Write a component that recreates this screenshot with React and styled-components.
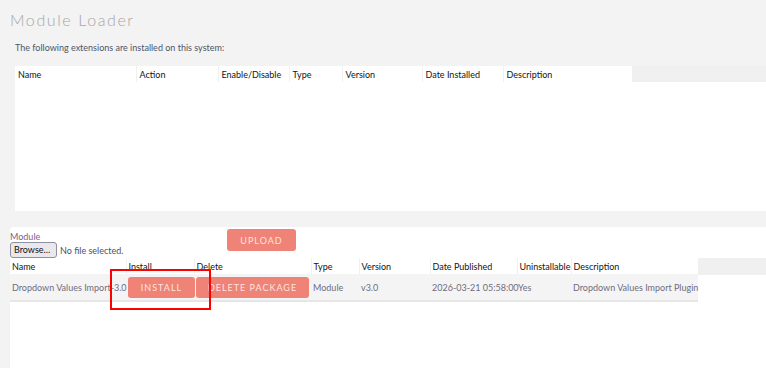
import React from "react";
import styled, { createGlobalStyle } from "styled-components";

const Global = createGlobalStyle`
  html, body {
    margin: 0;
    padding: 0;
    background: #f3f3f3;
    font-family: Lato, "Open Sans", sans-serif;
  }
`;

const installed = [
  { label: "Name", w: 121 },
  { label: "Action", w: 82 },
  { label: "Enable/Disable", w: 71 },
  { label: "Type", w: 53 },
  { label: "Version", w: 80 },
  { label: "Date Installed", w: 81 },
  { label: "Description", w: 129 }
];

const available = [
  { label: "Name", w: 116 },
  { label: "Install", w: 68 },
  { label: "Delete", w: 117 },
  { label: "Type", w: 48 },
  { label: "Version", w: 71 },
  { label: "Date Published", w: 87 },
  { label: "Uninstallable", w: 54 },
  { label: "Description", w: 127 }
];

const total = cols => cols.reduce((s, c) => s + c.w, 0);

export default function App() {
  return (
    <Page>
      <Global />
      <Title>Module Loader</Title>
      <Intro>The following extensions are installed on this system:</Intro>
      <InstalledPanel>
        <HeadRow>
          <Grid $w={total(installed)}>
            <colgroup>
              {installed.map(c => (
                <col key={c.label} width={c.w} />
              ))}
            </colgroup>
            <thead>
              <tr>
                {installed.map(c => (
                  <Th key={c.label} $pad={3}>
                    {c.label}
                  </Th>
                ))}
              </tr>
            </thead>
          </Grid>
          <HeadFill />
        </HeadRow>
        <EmptyBody />
      </InstalledPanel>
      <UploadPanel>
        <UploadRow>
          <FileField>
            <FieldLabel>Module</FieldLabel>
            <FileLine>
              <Browse>Browse…</Browse>
              <NoFile>No file selected.</NoFile>
            </FileLine>
          </FileField>
          <Button $w={69} $h={22}>UPLOAD</Button>
        </UploadRow>
        <HeadRow>
          <Grid $w={total(available)}>
            <colgroup>
              {available.map(c => (
                <col key={c.label} width={c.w} />
              ))}
            </colgroup>
            <thead>
              <tr>
                {available.map(c => (
                  <Th key={c.label} $pad={2}>
                    {c.label}
                  </Th>
                ))}
              </tr>
            </thead>
            <tbody>
              <tr>
                <Td>Dropdown Values Import-3.0</Td>
                <Td>
                  <Highlight>
                    <Button $w={67} $h={21}>INSTALL</Button>
                  </Highlight>
                </Td>
                <Td>
                  <Button $w={113} $h={21}>DELETE PACKAGE</Button>
                </Td>
                <Td>Module</Td>
                <Td>v3.0</Td>
                <Td>2026-03-21 05:58:00</Td>
                <Td $pad={1}>Yes</Td>
                <Td>Dropdown Values Import Plugin</Td>
              </tr>
            </tbody>
          </Grid>
          <HeadFill $h={17} />
        </HeadRow>
      </UploadPanel>
    </Page>
  );
}

const Page = styled.div`
  display: flex;
  flex-direction: column;
  width: 766px;
  height: 368px;
  overflow: hidden;
`;
const Title = styled.h1`
  margin: 10px 0 0 10px;
  font-size: 16px;
  font-weight: 300;
  letter-spacing: 1.6px;
  color: #a6a6a6;
  line-height: 20px;
`;
const Intro = styled.p`
  margin: 12px 0 0 15px;
  font-size: 9px;
  color: #4f5368;
  line-height: 11px;
`;
const InstalledPanel = styled.div`
  margin: 13px 0 0 15px;
  height: 145px;
  background: #fff;
  display: flex;
  flex-direction: column;
`;
const HeadRow = styled.div`
  display: flex;
  align-items: flex-start;
`;
const HeadFill = styled.div`
  flex: 1;
  height: ${p => p.$h || 16}px;
  background: #f0f0f0;
`;
const EmptyBody = styled.div`
  flex: 1;
`;
const Grid = styled.table`
  width: ${p => p.$w}px;
  flex-shrink: 0;
  border-collapse: collapse;
  table-layout: fixed;
  background: #fff;
`;
const Th = styled.th`
  text-align: left;
  font-size: 9px;
  font-weight: 400;
  color: #141414;
  height: 16px;
  padding: 0 ${p => p.$pad}px;
  border-left: 1px solid #f0f0f0;
  white-space: nowrap;
  overflow: hidden;
  &:first-child {
    border-left: none;
  }
`;
const Td = styled.td`
  background: #f4f4f4;
  border-bottom: 2px solid #e6e6e6;
  height: 26px;
  padding: 0 2px 0 ${p => (p.$pad != null ? p.$pad : 2)}px;
  font-size: 9px;
  color: #6f6c80;
  white-space: nowrap;
  overflow: visible;
`;
const UploadPanel = styled.div`
  margin: 16px 0 0 10px;
  flex: 1;
  background: #fff;
  border-top-left-radius: 4px;
`;
const UploadRow = styled.div`
  display: flex;
  align-items: flex-start;
  padding-top: 2px;
  height: 29px;
`;
const FileField = styled.div`
  display: flex;
  flex-direction: column;
  width: 217px;
  padding-top: 2px;
`;
const FieldLabel = styled.span`
  font-size: 9px;
  line-height: 11px;
  color: #7d5f7d;
`;
const FileLine = styled.div`
  display: flex;
  align-items: center;
  gap: 3px;
`;
const Browse = styled.span`
  box-sizing: border-box;
  width: 47px;
  height: 16px;
  padding: 0 3px;
  font-size: 9px;
  line-height: 14px;
  color: #111;
  background: #e9e9ed;
  border: 1px solid #8f8f9d;
  border-radius: 3px;
`;
const NoFile = styled.span`
  font-size: 9px;
  color: #4f4f5f;
`;
const Button = styled.span`
  display: inline-flex;
  box-sizing: border-box;
  align-items: center;
  justify-content: center;
  width: ${p => p.$w}px;
  height: ${p => p.$h}px;
  background: #f08377;
  color: #fde3df;
  border-radius: 3px;
  font-size: 9px;
  letter-spacing: 1px;
`;
const Highlight = styled.div`
  position: relative;
  display: inline-block;
  vertical-align: middle;
  &::after {
    content: "";
    position: absolute;
    left: -18px;
    top: -8px;
    width: 97px;
    height: 37px;
    border: 2px solid #f00;
  }
`;
